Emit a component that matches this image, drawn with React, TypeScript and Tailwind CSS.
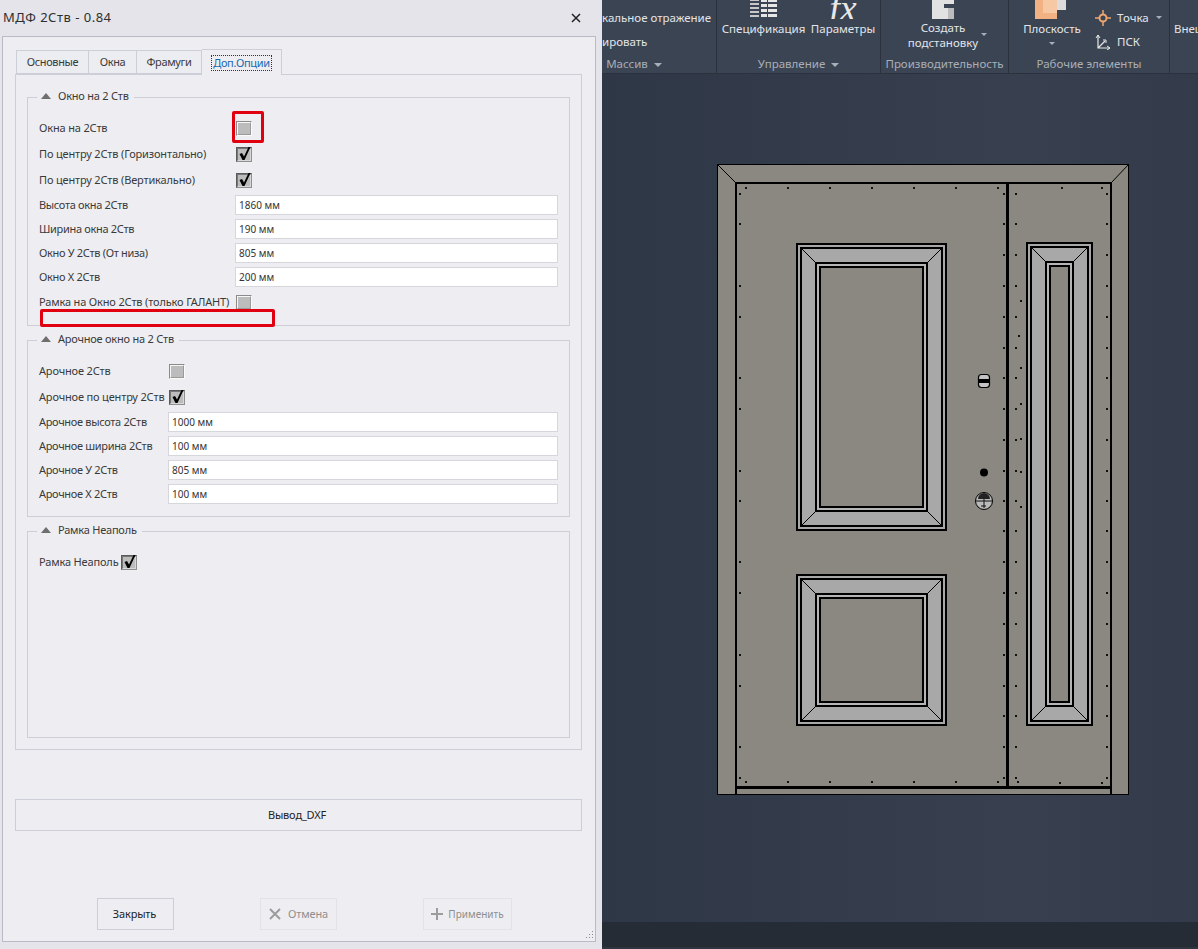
import { FC, ReactNode } from "react";

const font = "font-['Noto_Sans',sans-serif]";

const Checkbox: FC<{ checked?: boolean }> = ({ checked }) => (
  <div
    className={`w-[16px] h-[15px] shrink-0 border ${
      checked
        ? "border-t-[#5a5a5a] border-l-[#5a5a5a] border-r-[#8f8f8f] border-b-[#8f8f8f]"
        : "border-t-[#8a8a8a] border-l-[#8a8a8a] border-r-[#fafafa] border-b-[#fafafa]"
    }`}
  >
    <div
      className={`relative w-full h-full border bg-[#bcbcbc] ${
        checked
          ? "border-t-[#777] border-l-[#777] border-r-[#d8d8d8] border-b-[#d8d8d8]"
          : "border-t-[#f6f6f6] border-l-[#f6f6f6] border-r-[#9a9a9a] border-b-[#9a9a9a]"
      }`}
    >
      {checked && (
        <svg width="13" height="15" viewBox="0 0 13 15" className="absolute left-0 -top-[3px]">
          <path d="M1.5 8 L4 7 L6 10.5 L10.5 1 L12.5 1 L6.5 14 L4.5 14 Z" fill="#000" />
        </svg>
      )}
    </div>
  </div>
);

const CheckRow: FC<{ label: string; labelW: string; checked?: boolean }> = ({
  label,
  labelW,
  checked,
}) => (
  <div className="flex items-center h-[26px]">
    <div className={`${labelW} shrink-0 whitespace-nowrap`}>{label}</div>
    <Checkbox checked={checked} />
  </div>
);

const InputRow: FC<{ label: string; labelW: string; value: string }> = ({
  label,
  labelW,
  value,
}) => (
  <div className="flex items-center h-[24px]">
    <div className={`${labelW} shrink-0 whitespace-nowrap tracking-[-0.32px]`}>{label}</div>
    <div className="flex-1 h-[20px] bg-white border border-[#d6d6dd] px-[3px] flex items-center text-[10px] tracking-normal text-[#333]">
      {value}
    </div>
  </div>
);

const Group: FC<{ title: string; h: string; children: ReactNode }> = ({
  title,
  h,
  children,
}) => (
  <div className={`${h} border border-[#ccced8] pl-[11px] pr-[11px]`}>
    <div className="flex items-center h-[16px] -mt-[10px] mb-[11px] -ml-[2px] pl-[4px] pr-[5px] w-fit bg-[#eeeef2] tracking-[-0.22px]">
      <svg width="10" height="6" viewBox="0 0 10 6" className="mr-[7px]">
        <path d="M5 0 L10 6 L0 6 Z" fill="#6f6f6f" />
      </svg>
      <span>{title}</span>
    </div>
    {children}
  </div>
);

const Tab: FC<{ w: string; active?: boolean; children: ReactNode }> = ({
  w,
  active,
  children,
}) => (
  <div
    className={`${w} flex items-center justify-center tracking-[-0.35px] border border-[#cdcfd8] border-l-0 first:border-l ${
      active ? "h-[26px] -mb-px bg-[#eeeef2] border-b-0 text-[#1769b0] relative z-10" : "h-[24px] bg-[#ecedf1]"
    }`}
  >
    {active ? (
      <span className="border border-dotted border-[#333] leading-[14px] px-px">{children}</span>
    ) : (
      children
    )}
  </div>
);

const Dialog = () => (
  <div className={`w-[602px] shrink-0 h-[949px] bg-[#e4e4ea] flex flex-col text-[11px] tracking-[-0.16px] text-[#3a3a3a] ${font}`}>
    <div className="w-[596px] h-[36px] flex items-center justify-between pl-[3px] pr-[15px] text-[13px] text-[#2f2f2f] tracking-[0.5px]">
      <span>МДФ 2Ств - 0.84</span>
      <svg width="10" height="10" viewBox="0 0 10 10">
        <path d="M1 1 L9 9 M9 1 L1 9" stroke="#222" strokeWidth="1.5" />
      </svg>
    </div>
    <div className="relative ml-[2px] w-[594px] h-[906px] bg-[#eeeef2] border border-[#b8bac6] pl-[12px] pr-[13px] pt-[12px] flex flex-col">
      <div className="flex items-end h-[25px] pl-px">
        <Tab w="w-[73px]">Основные</Tab>
        <Tab w="w-[48px]">Окна</Tab>
        <Tab w="w-[65px]">Фрамуги</Tab>
        <Tab w="w-[80px]" active>
          Доп.Опции
        </Tab>
      </div>
      <div className="h-[676px] border border-[#cdcfd8] px-[11px] pt-[22px] flex flex-col gap-[14px]">
        <Group title="Окно на 2 Ств" h="h-[229px]">
          <CheckRow label="Окна на 2Ств" labelW="w-[197px]" />
          <CheckRow label="По центру 2Ств (Горизонтально)" labelW="w-[197px]" checked />
          <CheckRow label="По центру 2Ств (Вертикально)" labelW="w-[197px]" checked />
          <InputRow label="Высота окна 2Ств" labelW="w-[196px]" value="1860 мм" />
          <InputRow label="Ширина окна 2Ств" labelW="w-[196px]" value="190 мм" />
          <InputRow label="Окно У 2Ств (От низа)" labelW="w-[196px]" value="805 мм" />
          <InputRow label="Окно Х 2Ств" labelW="w-[196px]" value="200 мм" />
          <CheckRow label="Рамка на Окно 2Ств (только ГАЛАНТ)" labelW="w-[197px]" />
        </Group>
        <Group title="Арочное окно на 2 Ств" h="h-[177px]">
          <CheckRow label="Арочное 2Ств" labelW="w-[130px]" />
          <CheckRow label="Арочное по центру 2Ств" labelW="w-[130px]" checked />
          <InputRow label="Арочное высота 2Ств" labelW="w-[129px]" value="1000 мм" />
          <InputRow label="Арочное ширина 2Ств" labelW="w-[129px]" value="100 мм" />
          <InputRow label="Арочное У 2Ств" labelW="w-[129px]" value="805 мм" />
          <InputRow label="Арочное Х 2Ств" labelW="w-[129px]" value="100 мм" />
        </Group>
        <Group title="Рамка Неаполь" h="h-[207px]">
          <CheckRow label="Рамка Неаполь" labelW="w-[82px]" checked />
        </Group>
      </div>
      <div className="mt-[49px] h-[32px] border border-[#cdcfd8] flex items-center justify-center pr-[3px] text-[#222]">
        Вывод_DXF
      </div>
      <div className="mt-[67px] flex pl-[82px]">
        <div className="w-[77px] h-[32px] border border-[#cdcfd8] flex items-center justify-center pr-[2px] text-[#222]">
          Закрыть
        </div>
        <div className="ml-[86px] w-[77px] h-[32px] border border-[#e2e3e9] flex items-center justify-center gap-[7px] text-[#8e8e8e]">
          <svg width="12" height="12" viewBox="0 0 12 12">
            <path d="M1 1 L11 11 M11 1 L1 11" stroke="#9c9c9c" strokeWidth="2" />
          </svg>
          Отмена
        </div>
        <div className="ml-[86px] w-[89px] h-[32px] border border-[#e2e3e9] flex items-center justify-center gap-[5px] text-[10px] tracking-normal text-[#8e8e8e]">
          <svg width="12" height="12" viewBox="0 0 12 12">
            <path d="M6 0 V12 M0 6 H12" stroke="#9c9c9c" strokeWidth="2" />
          </svg>
          Применить
        </div>
      </div>
      {/* resize grip */}
      <svg width="10" height="10" viewBox="0 0 10 10" className="absolute right-px bottom-px">
        <path d="M8 1h1v1H8zM8 4h1v1H8zM5 4h1v1H5zM8 7h1v1H8zM5 7h1v1H5zM2 7h1v1H2z" fill="#8a8a92" />
      </svg>
      {/* red marks drawn over the screenshot */}
      <div className="absolute left-[229px] top-[74px] w-[32px] h-[32px] border-[3px] rounded-[2px] border-[#e0000f]" />
      <div className="absolute left-[37px] top-[272px] w-[235px] h-[18px] border-[3px] rounded-[2px] border-[#e0000f]" />
    </div>
  </div>
);

const RibbonSection: FC<{ w: string; title: ReactNode; children: ReactNode; last?: boolean }> = ({
  w,
  title,
  children,
  last,
}) => (
  <div className={`${w} shrink-0 h-full flex flex-col ${last ? "" : "border-r border-[#2b323e]"}`}>
    <div className="h-[54px] relative overflow-hidden">{children}</div>
    <div className="h-[19px] flex items-center justify-center text-[#a9afb8] whitespace-nowrap">{title}</div>
  </div>
);

const Caret = () => <span className="inline-block ml-[6px] align-middle w-0 h-0 border-x-[4px] border-x-transparent border-t-[4px] border-t-[#a9afb8]" />;

const Ribbon = () => (
  <div className={`h-[74px] bg-[#3b4453] border-b border-[#2b323e] flex text-[11.5px] text-[#e3e5e8] ${font}`}>
    <RibbonSection
      w="w-[115px]"
      title={
        <span className="pr-[50px]">
          Массив
          <Caret />
        </span>
      }
    >
      <div className="flex flex-col whitespace-nowrap pt-[10px] gap-[9px] leading-[15px]">
        <span>кальное отражение</span>
        <span>ировать</span>
      </div>
    </RibbonSection>
    <RibbonSection
      w="w-[164px]"
      title={
        <span>
          Управление
          <Caret />
        </span>
      }
    >
      <div className="flex pl-[4px]">
        <div className="w-[85px] flex flex-col items-center">
          <svg width="30" height="19" viewBox="0 1 30 19">
            <path d="M1 0h9v2H1zM1 4h9v2H1zM1 8h9v2H1zM1 12h9v2H1zM1 16h9v2H1z" fill="#c8c8c8" />
            <path d="M12 0h6v3h-6zM19 0h9v3h-9zM12 5h6v3h-6zM19 5h9v3h-9zM12 10h6v3h-6zM19 10h9v3h-9zM12 15h6v3h-6zM19 15h9v3h-9z" fill="#e6e6e6" />
          </svg>
          <span className="mt-[1px]">Спецификация</span>
        </div>
        <div className="w-[74px] flex flex-col items-center">
          <div className="h-[19px] overflow-hidden font-['Liberation_Serif',serif] italic text-[38px] leading-[16px] text-[#e8e8e8]">
            fx
          </div>
          <span className="mt-[1px]">Параметры</span>
        </div>
      </div>
    </RibbonSection>
    <RibbonSection w="w-[128px]" title="Производительность">
      <div className="flex flex-col items-center pr-[3px]">
        <svg width="24" height="19" viewBox="0 0 24 19">
          <path d="M1 0H23V4H13V8H23V19H1Z" fill="#e2e2e2" />
          <path d="M17 8H23V19H17Z" fill="#bdbdbd" />
        </svg>
        <span className="leading-[16px] mt-[1px]">Создать</span>
        <span className="leading-[16px] mt-[-1px]">подстановку</span>
        <span className="absolute left-[100px] top-[33px] w-0 h-0 border-x-[3px] border-x-transparent border-t-[3px] border-t-[#a9afb8]" />
      </div>
    </RibbonSection>
    <RibbonSection w="w-[161px]" title="Рабочие элементы">
      <div className="flex pl-[13px]">
        <div className="flex flex-col items-center w-[60px]">
          <svg width="32" height="19" viewBox="0 0 32 19" className="-ml-[2px]">
            <path d="M0 0H22V19H0Z" fill="#f2b183" />
            <path d="M8 0H22V13H8Z" fill="#f6c8a4" />
            <path d="M22 0H31V10H22Z" fill="#dcdcdc" />
          </svg>
          <span className="mt-[1px]">Плоскость</span>
          <span className="mt-[5px] w-0 h-0 border-x-[3px] border-x-transparent border-t-[3px] border-t-[#a9afb8]" />
        </div>
        <div className="flex flex-col pl-[13px] pt-[9px] gap-[7px] leading-[17px]">
          <div className="flex items-center">
            <svg width="16" height="16" viewBox="0 0 16 16">
              <path d="M8 0V16M0 8H16" stroke="#eca66f" strokeWidth="1.5" />
              <circle cx="8" cy="8" r="3.5" fill="#3b4453" stroke="#eca66f" strokeWidth="2" />
            </svg>
            <span className="ml-[6px]">Точка</span>
            <span className="ml-[7px] w-0 h-0 border-x-[3px] border-x-transparent border-t-[3px] border-t-[#a9afb8]" />
          </div>
          <div className="flex items-center">
            <svg width="16" height="16" viewBox="0 0 16 16">
              <path d="M3 1V14H15M3 14L10 7" fill="none" stroke="#e8e8e8" strokeWidth="1.2" />
              <path d="M1 4L3 1L5 4M12 12L15 14L12 16M8 6H11V9" fill="none" stroke="#e8e8e8" strokeWidth="1" />
            </svg>
            <span className="ml-[6px]">ПСК</span>
          </div>
        </div>
      </div>
    </RibbonSection>
    <RibbonSection w="w-[28px]" title="" last>
      <div className="pl-[4px] pt-[20px] whitespace-nowrap">Внешние</div>
    </RibbonSection>
  </div>
);

const Panel: FC<{ x1: number; y1: number; x2: number; y2: number }> = ({ x1, y1, x2, y2 }) => {
  const rect = (i: number) => ({ x: x1 + i, y: y1 + i, width: x2 - x1 - 2 * i, height: y2 - y1 - 2 * i });
  return (
    <g>
      <rect {...rect(0)} fill="#a8a8a8" stroke="#000" strokeWidth="1.6" />
      <rect {...rect(4)} fill="#a8a8a8" stroke="#000" strokeWidth="2.4" />
      <path
        d={`M${x1 + 5} ${y1 + 5}L${x1 + 18} ${y1 + 18}M${x2 - 5} ${y1 + 5}L${x2 - 18} ${y1 + 18}M${x1 + 5} ${y2 - 5}L${x1 + 18} ${y2 - 18}M${x2 - 5} ${y2 - 5}L${x2 - 18} ${y2 - 18}`}
        stroke="#000"
        strokeWidth="1"
        shapeRendering="auto"
      />
      <rect {...rect(19)} fill="#b5b5b5" stroke="#000" strokeWidth="2.6" />
      <rect {...rect(23)} fill="#8a8880" stroke="#000" strokeWidth="1.2" />
    </g>
  );
};

// крепёж по периметру створок
const screws: [number, number][] = [
  [745, 187], [787, 187], [829, 187], [871, 187], [913, 187], [955, 187], [997, 187],
  [739, 193], [1003, 193], [739, 223], [1003, 223], [1003, 254], [739, 285], [1003, 285],
  [739, 316], [1003, 316], [1003, 347],
  [1003, 377], [1003, 408], [1003, 439], [1003, 470], [1003, 500], [1003, 530], [1003, 561],
  [1003, 592], [1003, 623], [1003, 654], [1003, 685], [1003, 715], [1003, 746], [1003, 777],
  [739, 377], [739, 408], [739, 470], [739, 500], [739, 561],
  [739, 592], [739, 654], [739, 685], [739, 746], [739, 777],
  [745, 781], [787, 781], [829, 781], [871, 781], [913, 781], [955, 781], [997, 781],
  [1015, 193], [1106, 193], [1015, 223], [1106, 223], [1015, 254], [1106, 254], [1015, 285], [1106, 285],
  [1015, 316], [1106, 316], [1015, 347], [1106, 347], [1015, 377], [1106, 377], [1015, 408], [1106, 408],
  [1015, 439], [1106, 439], [1015, 470], [1106, 470], [1015, 500], [1106, 500], [1015, 530], [1106, 530],
  [1015, 561], [1106, 561], [1015, 592], [1106, 592], [1015, 623], [1106, 623], [1015, 654], [1106, 654],
  [1015, 685], [1106, 685], [1015, 715], [1106, 715], [1015, 746], [1106, 746], [1015, 777], [1106, 777],
  [1020, 367], [1020, 403], [1020, 438], [1020, 471], [1020, 506], [1018, 335], [1020, 300],
  [1017, 781], [1059, 782], [1101, 782], [1061, 187], [1101, 187],
];

const Door = () => (
  <svg viewBox="602 74 596 848" width="596" height="848" className="block" shapeRendering="crispEdges">
    <rect x="717.5" y="164.5" width="411" height="630" fill="#8a8880" stroke="#000" strokeWidth="1.6" />
    <path d="M717 164L736 183M1129 164L1111 183" stroke="#000" strokeWidth="1" shapeRendering="auto" />
    <path d="M736 183V795M1111 183V795M736 183H1111M736 787.5H1111" fill="none" stroke="#000" strokeWidth="2.4" />
    <path d="M1007.5 183V787" stroke="#000" strokeWidth="2.4" />
    <Panel x1={797} y1={244} x2={946} y2={530} />
    <Panel x1={797} y1={575} x2={946} y2={725} />
    <Panel x1={1027} y1={243} x2={1092} y2={725} />
    {screws.map(([x, y]) => (
      <rect key={`${x}-${y}`} x={x} y={y} width="2" height="2" fill="#111" />
    ))}
    <g shapeRendering="auto">
      <rect x="978.5" y="374.5" width="11" height="13" rx="3" fill="#c4c4c4" stroke="#000" strokeWidth="1.2" />
      <rect x="979" y="379" width="10" height="4" fill="#000" />
      <circle cx="984" cy="472.5" r="4" fill="#000" />
      <circle cx="984" cy="501" r="8.5" fill="#b9b9b9" stroke="#000" strokeWidth="1" />
      <path d="M978 499a6 6 0 0 1 12 0Z" fill="#222" />
      <path d="M976 501H992M984 499V508M981 506H986" stroke="#111" strokeWidth="1" fill="none" />
    </g>
  </svg>
);

const App = () => (
  <div className="w-[1198px] h-[949px] overflow-hidden flex bg-[#2f3847]">
    <Dialog />
    <div className="w-[596px] shrink-0 flex flex-col">
      <Ribbon />
      <div className="bg-[linear-gradient(90deg,#2e3746,#384050_70%,#333b4b)]">
        <Door />
      </div>
      <div className="h-[25px] bg-[#262c36]" />
      <div className="h-[2px] bg-[#2f3641]" />
    </div>
  </div>
);

export default App;
